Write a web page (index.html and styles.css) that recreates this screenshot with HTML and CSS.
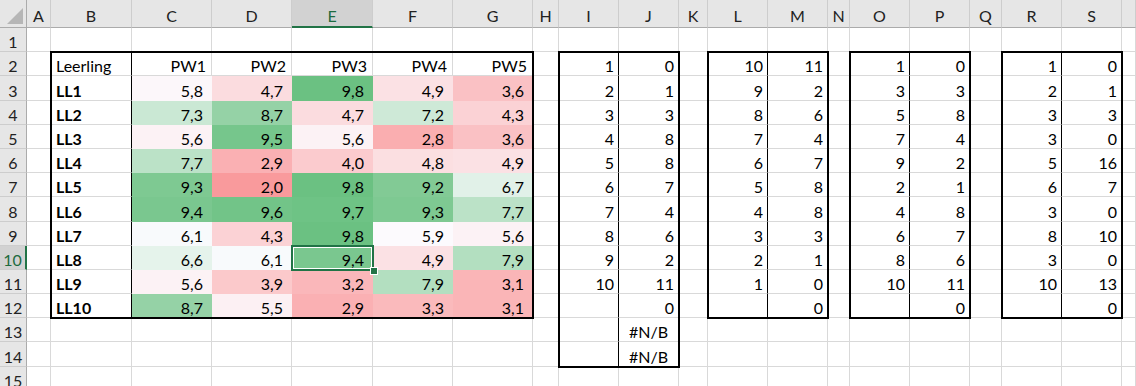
FILE: index.html
```html
<!DOCTYPE html>
<html lang="nl">
<head>
<meta charset="utf-8">
<title>Leerlingen</title>
<link rel="stylesheet" href="styles.css">
<script src="script.js" defer></script>
</head>
<body>
<div class="stack">
<div class="sheet">
  <div class="h corner"><span class="tri"></span></div>
  <div class="h">A</div><div class="h">B</div><div class="h">C</div><div class="h">D</div><div class="h hsel">E</div><div class="h">F</div><div class="h">G</div><div class="h">H</div><div class="h">I</div><div class="h">J</div><div class="h">K</div><div class="h">L</div><div class="h">M</div><div class="h">N</div><div class="h">O</div><div class="h">P</div><div class="h">Q</div><div class="h">R</div><div class="h">S</div><div class="h"></div>

  <div class="rh">1</div>
  <div class="c"></div><div class="c"></div><div class="c"></div><div class="c"></div><div class="c"></div><div class="c"></div><div class="c"></div><div class="c"></div><div class="c"></div><div class="c"></div><div class="c"></div><div class="c"></div><div class="c"></div><div class="c"></div><div class="c"></div><div class="c"></div><div class="c"></div><div class="c"></div><div class="c"></div><div class="c"></div>

  <div class="rh">2</div>
  <div class="c"></div><div class="c vb">Leerling</div><div class="c r pw">PW1</div><div class="c r pw">PW2</div><div class="c r pw">PW3</div><div class="c r pw">PW4</div><div class="c r pw">PW5</div>
  <div class="c"></div><div class="c r vb">1</div><div class="c r">0</div>
  <div class="c"></div><div class="c r vb">10</div><div class="c r">11</div>
  <div class="c"></div><div class="c r vb">1</div><div class="c r">0</div>
  <div class="c"></div><div class="c r vb">1</div><div class="c r">0</div>
  <div class="c"></div>

  <div class="rh">3</div>
  <div class="c"></div><div class="c b vb">LL1</div><div class="c r sc cs">5,8</div><div class="c r sc cs">4,7</div><div class="c r sc cs">9,8</div><div class="c r sc cs">4,9</div><div class="c r sc cs">3,6</div>
  <div class="c"></div><div class="c r vb">2</div><div class="c r">1</div>
  <div class="c"></div><div class="c r vb">9</div><div class="c r">2</div>
  <div class="c"></div><div class="c r vb">3</div><div class="c r">3</div>
  <div class="c"></div><div class="c r vb">2</div><div class="c r">1</div>
  <div class="c"></div>

  <div class="rh">4</div>
  <div class="c"></div><div class="c b vb">LL2</div><div class="c r sc cs">7,3</div><div class="c r sc cs">8,7</div><div class="c r sc cs">4,7</div><div class="c r sc cs">7,2</div><div class="c r sc cs">4,3</div>
  <div class="c"></div><div class="c r vb">3</div><div class="c r">3</div>
  <div class="c"></div><div class="c r vb">8</div><div class="c r">6</div>
  <div class="c"></div><div class="c r vb">5</div><div class="c r">8</div>
  <div class="c"></div><div class="c r vb">3</div><div class="c r">3</div>
  <div class="c"></div>

  <div class="rh">5</div>
  <div class="c"></div><div class="c b vb">LL3</div><div class="c r sc cs">5,6</div><div class="c r sc cs">9,5</div><div class="c r sc cs">5,6</div><div class="c r sc cs">2,8</div><div class="c r sc cs">3,6</div>
  <div class="c"></div><div class="c r vb">4</div><div class="c r">8</div>
  <div class="c"></div><div class="c r vb">7</div><div class="c r">4</div>
  <div class="c"></div><div class="c r vb">7</div><div class="c r">4</div>
  <div class="c"></div><div class="c r vb">3</div><div class="c r">0</div>
  <div class="c"></div>

  <div class="rh">6</div>
  <div class="c"></div><div class="c b vb">LL4</div><div class="c r sc cs">7,7</div><div class="c r sc cs">2,9</div><div class="c r sc cs">4,0</div><div class="c r sc cs">4,8</div><div class="c r sc cs">4,9</div>
  <div class="c"></div><div class="c r vb">5</div><div class="c r">8</div>
  <div class="c"></div><div class="c r vb">6</div><div class="c r">7</div>
  <div class="c"></div><div class="c r vb">9</div><div class="c r">2</div>
  <div class="c"></div><div class="c r vb">5</div><div class="c r">16</div>
  <div class="c"></div>

  <div class="rh">7</div>
  <div class="c"></div><div class="c b vb">LL5</div><div class="c r sc cs">9,3</div><div class="c r sc cs">2,0</div><div class="c r sc cs">9,8</div><div class="c r sc cs">9,2</div><div class="c r sc cs">6,7</div>
  <div class="c"></div><div class="c r vb">6</div><div class="c r">7</div>
  <div class="c"></div><div class="c r vb">5</div><div class="c r">8</div>
  <div class="c"></div><div class="c r vb">2</div><div class="c r">1</div>
  <div class="c"></div><div class="c r vb">6</div><div class="c r">7</div>
  <div class="c"></div>

  <div class="rh">8</div>
  <div class="c"></div><div class="c b vb">LL6</div><div class="c r sc cs">9,4</div><div class="c r sc cs">9,6</div><div class="c r sc cs">9,7</div><div class="c r sc cs">9,3</div><div class="c r sc cs">7,7</div>
  <div class="c"></div><div class="c r vb">7</div><div class="c r">4</div>
  <div class="c"></div><div class="c r vb">4</div><div class="c r">8</div>
  <div class="c"></div><div class="c r vb">4</div><div class="c r">8</div>
  <div class="c"></div><div class="c r vb">3</div><div class="c r">0</div>
  <div class="c"></div>

  <div class="rh">9</div>
  <div class="c"></div><div class="c b vb">LL7</div><div class="c r sc cs">6,1</div><div class="c r sc cs">4,3</div><div class="c r sc cs">9,8</div><div class="c r sc cs">5,9</div><div class="c r sc cs">5,6</div>
  <div class="c"></div><div class="c r vb">8</div><div class="c r">6</div>
  <div class="c"></div><div class="c r vb">3</div><div class="c r">3</div>
  <div class="c"></div><div class="c r vb">6</div><div class="c r">7</div>
  <div class="c"></div><div class="c r vb">8</div><div class="c r">10</div>
  <div class="c"></div>

  <div class="rh rsel">10</div>
  <div class="c"></div><div class="c b vb">LL8</div><div class="c r sc cs">6,6</div><div class="c r sc cs">6,1</div><div class="c r sc cs">9,4</div><div class="c r sc cs">4,9</div><div class="c r sc cs">7,9</div>
  <div class="c"></div><div class="c r vb">9</div><div class="c r">2</div>
  <div class="c"></div><div class="c r vb">2</div><div class="c r">1</div>
  <div class="c"></div><div class="c r vb">8</div><div class="c r">6</div>
  <div class="c"></div><div class="c r vb">3</div><div class="c r">0</div>
  <div class="c"></div>

  <div class="rh">11</div>
  <div class="c"></div><div class="c b vb">LL9</div><div class="c r sc cs">5,6</div><div class="c r sc cs">3,9</div><div class="c r sc cs">3,2</div><div class="c r sc cs">7,9</div><div class="c r sc cs">3,1</div>
  <div class="c"></div><div class="c r vb">10</div><div class="c r">11</div>
  <div class="c"></div><div class="c r vb">1</div><div class="c r">0</div>
  <div class="c"></div><div class="c r vb">10</div><div class="c r">11</div>
  <div class="c"></div><div class="c r vb">10</div><div class="c r">13</div>
  <div class="c"></div>

  <div class="rh">12</div>
  <div class="c"></div><div class="c b vb">LL10</div><div class="c r sc cs">8,7</div><div class="c r sc cs">5,5</div><div class="c r sc cs">2,9</div><div class="c r sc cs">3,3</div><div class="c r sc cs">3,1</div>
  <div class="c"></div><div class="c r vb"></div><div class="c r">0</div>
  <div class="c"></div><div class="c r vb"></div><div class="c r">0</div>
  <div class="c"></div><div class="c r vb"></div><div class="c r">0</div>
  <div class="c"></div><div class="c r vb"></div><div class="c r">0</div>
  <div class="c"></div>

  <div class="rh">13</div>
  <div class="c"></div><div class="c"></div><div class="c"></div><div class="c"></div><div class="c"></div><div class="c"></div><div class="c"></div>
  <div class="c"></div><div class="c vb"></div><div class="c m">#N/B</div>
  <div class="c"></div><div class="c"></div><div class="c"></div><div class="c"></div><div class="c"></div><div class="c"></div><div class="c"></div><div class="c"></div><div class="c"></div><div class="c"></div>

  <div class="rh">14</div>
  <div class="c"></div><div class="c"></div><div class="c"></div><div class="c"></div><div class="c"></div><div class="c"></div><div class="c"></div>
  <div class="c"></div><div class="c vb"></div><div class="c m">#N/B</div>
  <div class="c"></div><div class="c"></div><div class="c"></div><div class="c"></div><div class="c"></div><div class="c"></div><div class="c"></div><div class="c"></div><div class="c"></div><div class="c"></div>

  <div class="rh">15</div>
  <div class="c"></div><div class="c"></div><div class="c"></div><div class="c"></div><div class="c"></div><div class="c"></div><div class="c"></div><div class="c"></div><div class="c"></div><div class="c"></div><div class="c"></div><div class="c"></div><div class="c"></div><div class="c"></div><div class="c"></div><div class="c"></div><div class="c"></div><div class="c"></div><div class="c"></div><div class="c"></div>
</div>
<div class="overlay">
  <div class="frame f-main"></div>
  <div class="frame f-ij"></div>
  <div class="frame f-lm"></div>
  <div class="frame f-op"></div>
  <div class="frame f-rs"></div>
  <div class="sel"><span class="handle"></span></div>
</div>
</div>
</body>
</html>
```

FILE: styles.css
```css
html, body {
  margin: 0;
  padding: 0;
  background: #ffffff;
  overflow: hidden;
}

.stack {
  display: grid;
  width: 1136px;
  height: 386px;
  overflow: hidden;
}

.sheet,
.overlay {
  grid-area: 1 / 1;
  display: grid;
  grid-template-columns: 27px 24px 81px 80px 80px 81px 80px 80px 26px 60px 60px 29px 60px 60px 22px 60px 60px 32px 60px 60px 1fr;
  grid-template-rows: 28px repeat(15, 24.2px);
  width: 1136px;
  height: 391px;
}

.overlay {
  pointer-events: none;
}

.sheet {
  font-family: Lato, "Liberation Sans", sans-serif;
  font-size: 16px;
  color: #000000;
}

.sheet > div {
  box-sizing: border-box;
  min-width: 0;
  overflow: hidden;
}

.h {
  background: #e6e6e6;
  border-right: 1px solid #cdcdcd;
  border-bottom: 1px solid #ababab;
  display: flex;
  align-items: flex-end;
  justify-content: center;
  padding-bottom: 2px;
  color: #222222;
}

.corner {
  position: relative;
  border-right-color: #ababab;
}

.tri {
  position: absolute;
  right: 3px;
  bottom: 3px;
  width: 16px;
  height: 16px;
  background: #b6b6b6;
  clip-path: polygon(100% 0, 100% 100%, 0 100%);
}

.hsel {
  background: #d2d2d2;
  color: #1d6b40;
  border-bottom: 2px solid #217346;
  padding-bottom: 1px;
}

.rh {
  background: #e6e6e6;
  border-right: 1px solid #ababab;
  border-bottom: 1px solid #cdcdcd;
  display: flex;
  align-items: flex-end;
  justify-content: center;
  color: #222222;
  padding-bottom: 0;
}

.rsel {
  background: #d2d2d2;
  color: #1d6b40;
  border-right: 2px solid #217346;
}

.c {
  border-right: 1px solid #d9d9d9;
  border-bottom: 1px solid #d9d9d9;
  display: flex;
  align-items: flex-end;
  padding: 0 4px 0 5px;
  white-space: nowrap;
}

.r { justify-content: flex-end; }
.m { justify-content: center; padding: 0; }
.pw { padding-right: 5px; }
.sc { padding-right: 8px; }
.b { font-weight: 700; }
.vb { border-right-color: #000000; }
.cs { border-color: transparent; }

.frame {
  border: 2px solid #000000;
  margin: -1px;
}

.f-main { grid-column: 3 / 9; grid-row: 3 / 14; }
.f-ij { grid-column: 10 / 12; grid-row: 3 / 16; }
.f-lm { grid-column: 13 / 15; grid-row: 3 / 14; }
.f-op { grid-column: 16 / 18; grid-row: 3 / 14; }
.f-rs { grid-column: 19 / 21; grid-row: 3 / 14; }

.sel {
  grid-column: 6 / 7;
  grid-row: 11 / 12;
  margin: -1px;
  border: 2px solid #217346;
  box-shadow: inset 0 0 0 1px #ffffff;
  position: relative;
}

.handle {
  position: absolute;
  right: -5px;
  bottom: -5px;
  width: 6px;
  height: 6px;
  box-sizing: border-box;
  background: #217346;
  outline: 1px solid #ffffff;
}
```

FILE: script.js
```js
(function () {
  var red = [248, 105, 107];
  var white = [252, 252, 255];
  var green = [99, 190, 123];
  function mix(a, b, t) {
    return [0, 1, 2].map(function (i) { return Math.round(a[i] + (b[i] - a[i]) * t); });
  }
  document.querySelectorAll('.cs').forEach(function (el) {
    var v = parseFloat(el.textContent.replace(',', '.'));
    var c = v <= 6 ? mix(red, white, v / 6) : mix(white, green, Math.min(1, (v - 6) / 4));
    el.style.backgroundColor = 'rgb(' + c.join(',') + ')';
  });
})();
```
